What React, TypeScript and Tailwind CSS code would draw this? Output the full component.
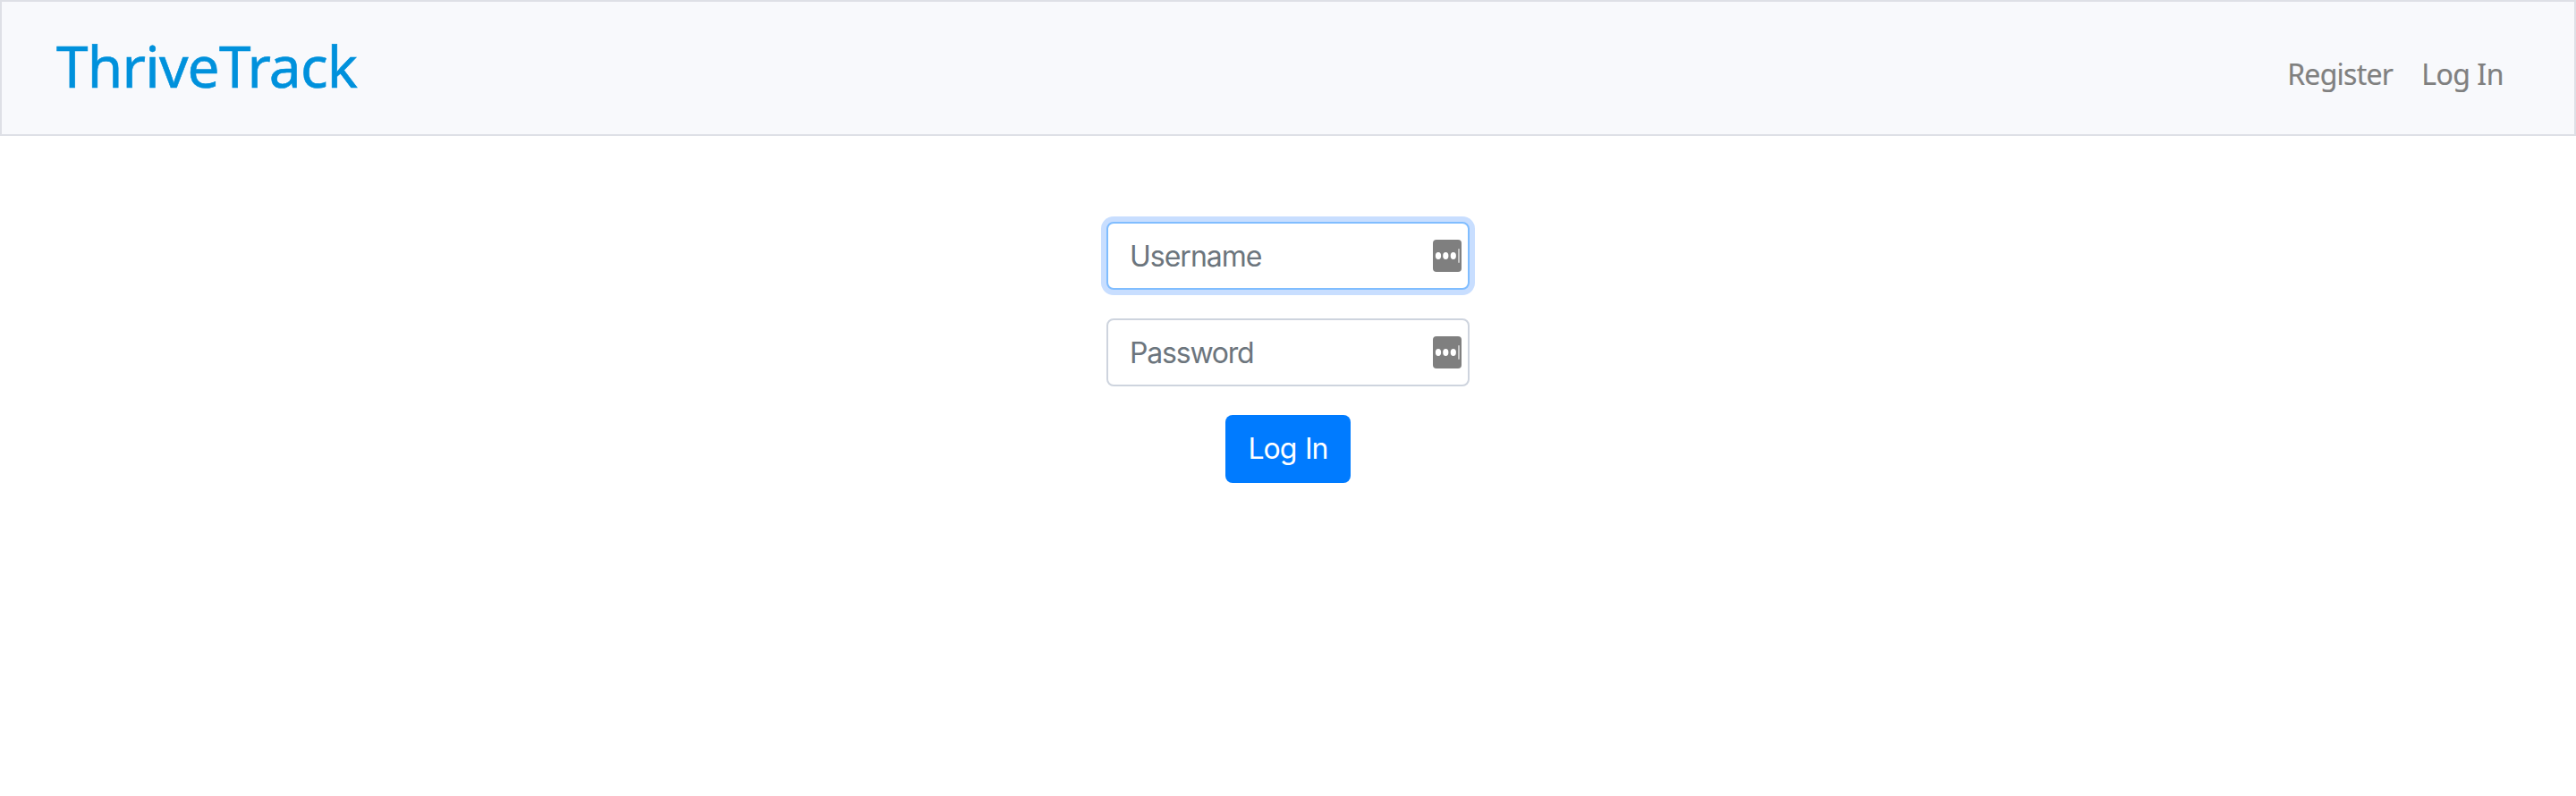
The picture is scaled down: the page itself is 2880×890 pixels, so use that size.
type FieldProps = {
  type: string;
  placeholder: string;
  tracking: string;
  focused?: boolean;
};

function PasswordManagerIcon() {
  return (
    <svg
      className="pointer-events-none absolute top-5 right-[9px] h-9 w-8"
      viewBox="0 0 32 36"
      aria-hidden="true"
    >
      <rect width="32" height="36" rx="4" fill="#7f7f7f" />
      <ellipse cx="6" cy="18" rx="3.1" ry="4" fill="#fff" />
      <ellipse cx="14.3" cy="18" rx="3.1" ry="4" fill="#fff" />
      <ellipse cx="22.8" cy="18" rx="3.1" ry="4" fill="#fff" />
      <rect x="28.3" y="10" width="1.4" height="16" rx="0.7" fill="#e4e4e4" />
    </svg>
  );
}

function Field({ type, placeholder, tracking, focused = false }: FieldProps) {
  const tone = focused
    ? "border-[#80bdff] ring-[6px] ring-[#c8deff]"
    : "border-[#ced4de]";
  return (
    <div className="relative h-[76px] w-[406px]">
      <input
        type={type}
        placeholder={placeholder}
        className={`block h-full w-full rounded-lg border-2 bg-white pr-12 pl-6 font-['Inter',sans-serif] text-[32px] outline-none placeholder:text-[#6c757d] placeholder:opacity-100 ${tracking} ${tone}`}
      />
      <PasswordManagerIcon />
    </div>
  );
}

export default function App() {
  return (
    <div className="min-h-[890px] bg-white">
      <nav className="flex h-[152px] items-center justify-between border-2 border-[#dee0e6] bg-[#f8f9fc] pr-[79px] pl-[61px] font-['Noto_Sans',sans-serif]">
        <a
          href="#"
          className="pb-[5px] text-[64px] leading-[96px] tracking-[-0.8px] text-[#0091dc] [-webkit-text-stroke:0.6px_#0091dc]"
        >
          ThriveTrack
        </a>
        <div className="flex gap-8 pt-[14px] text-[32px] leading-[48px] text-[#808080] [-webkit-text-stroke:0.2px_#808080]">
          <a href="#" className="tracking-[-0.75px]">
            Register
          </a>
          <a href="#" className="tracking-[-0.5px]">
            Log In
          </a>
        </div>
      </nav>
      <form className="flex flex-col items-center gap-8 pt-24">
        <Field type="text" placeholder="Username" tracking="tracking-[-1px]" focused />
        <Field type="password" placeholder="Password" tracking="tracking-[-1.2px]" />
        <button
          type="button"
          className="h-[76px] w-[140px] rounded-lg bg-[#007bff] font-['Inter',sans-serif] text-[32px] tracking-[-1.1px] text-white [word-spacing:2px]"
        >
          Log In
        </button>
      </form>
    </div>
  );
}
